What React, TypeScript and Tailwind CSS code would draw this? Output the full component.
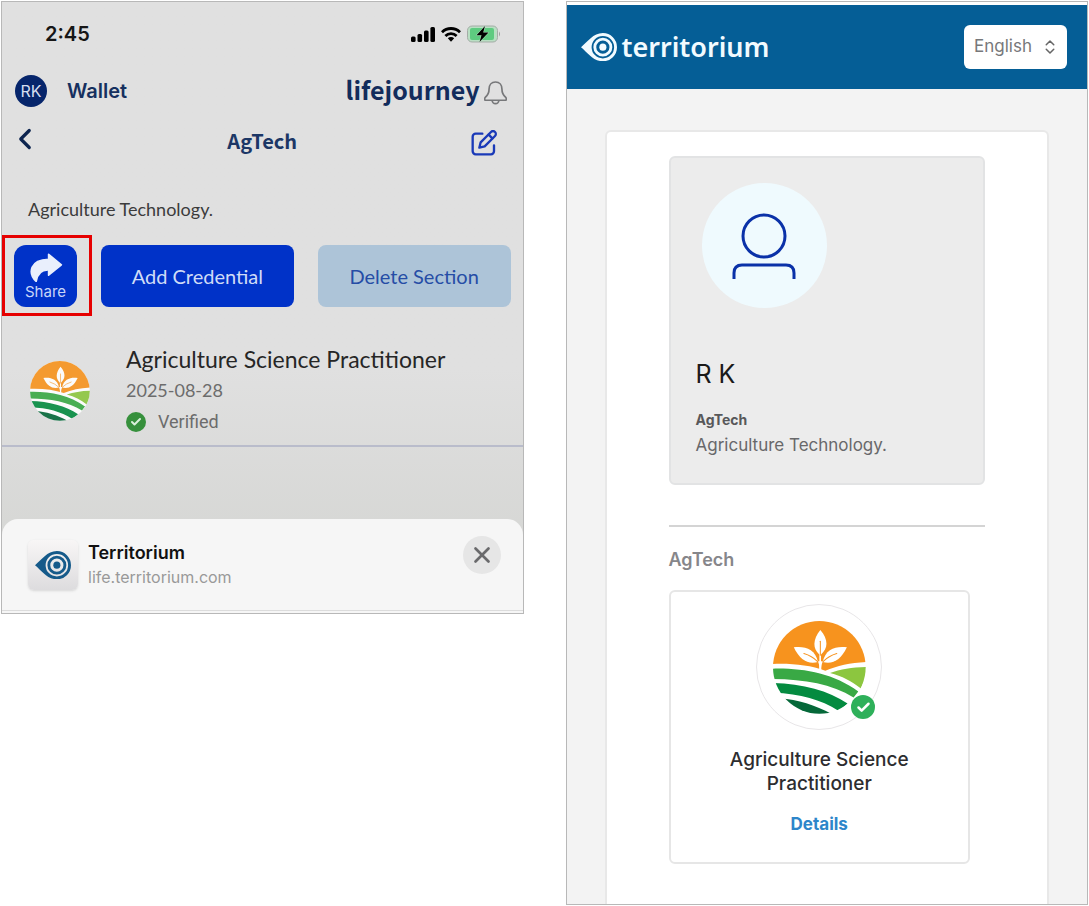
import React from 'react';
import clsx from 'clsx';
import { Check, ChevronLeft, ChevronsUpDown, X } from 'lucide-react';

const INTER = "font-['Inter',sans-serif]";
const LATO = "font-['Lato',sans-serif]";
const BRAND = "font-['Noto_Sans_CJK_JP',sans-serif]";

interface IconProps {
    className?: string;
}

const FieldLogo: React.FC<IconProps & { id: string }> = ({ className, id }) => (
    <svg viewBox="0 0 277 277" className={className} aria-hidden="true">
        <clipPath id={id}>
            <circle cx="138" cy="138" r="138" />
        </clipPath>
        <g clipPath={`url(#${id})`}>
            <rect width="277" height="277" fill="#fff" />
            {/* Sky */}
            <path d="M0 0H277V122C230 124 190 134 156 148C110 132 60 126 0 128Z" fill="#f7931e" />
            {/* Hills */}
            <path d="M170 155C200 144 235 138 277 137V165L262 201C235 180 205 164 170 155Z" fill="#8cc63f" />
            <path d="M0 142C90 140 180 156 254 210L240 228C175 188 95 174 0 173Z" fill="#39a945" />
            <path d="M0 185C90 187 165 208 222 246L196 268C140 234 85 217 0 214Z" fill="#048b40" />
            <path d="M20 230C75 234 125 250 175 277H20Z" fill="#056839" />
        </g>
        {/* Seedling */}
        <g fill="#fff">
            <path d="M141 27C166 56 164 82 143 100V150H138V100C118 82 118 56 141 27Z" />
            <path d="M62 78C94 74 126 82 134 122C104 130 80 116 62 78Z" />
            <path d="M220 78C188 74 156 82 148 122C178 130 202 116 220 78Z" />
            <path d="M134 120Q139 130 139 148H144Q143 130 149 120Z" />
        </g>
        <g fill="none" stroke="#f7931e" strokeWidth="3" strokeLinecap="round">
            <path d="M141 60V102" />
            <path d="M92 97Q116 104 133 121" />
            <path d="M190 97Q166 104 149 121" />
        </g>
    </svg>
);

const EyeLogo: React.FC<IconProps> = ({ className }) => (
    <svg viewBox="0 0 112 88" className={className} fill="none" stroke="currentColor" aria-hidden="true">
        <path
            d="M0 44C20 28 38 0 68 0a44 44 0 0 1 0 88C38 88 20 60 0 44ZM68 9a35 35 0 1 0 0 70a35 35 0 1 0 0-70Z"
            fill="currentColor"
            fillRule="evenodd"
            stroke="none"
        />
        <circle cx="68" cy="44" r="25" strokeWidth="9" />
        <circle cx="68" cy="44" r="11" fill="currentColor" stroke="none" />
    </svg>
);

const SignalIcon = () => (
    <svg viewBox="0 0 24 15" className="w-6" aria-hidden="true">
        <rect x="0" y="9.5" width="4.6" height="5.5" rx="1.5" />
        <rect x="6.5" y="7" width="4.6" height="8" rx="1.5" />
        <rect x="13" y="3.5" width="4.6" height="11.5" rx="1.5" />
        <rect x="19.4" y="0" width="4.6" height="15" rx="1.5" />
    </svg>
);

const WifiIcon = () => (
    <svg viewBox="0 0 20 15" className="w-5" aria-hidden="true">
        <g fill="none" stroke="#000" strokeWidth="2.8">
            <path d="M1 5.2A12.8 12.8 0 0 1 19 5.2" />
            <path d="M4.4 9A8 8 0 0 1 15.6 9" />
        </g>
        <path d="M6.8 11.2a4.6 4.6 0 0 1 6.4 0L10 14.8Z" />
    </svg>
);

const BatteryIcon = () => (
    <svg viewBox="0 0 34 18" className="w-[34px]" aria-hidden="true">
        <rect x="0.5" y="1" width="30" height="16" rx="4.5" fill="#b9dfc3" stroke="#a5aca7" />
        <path d="M5 3H25Q27 3 27 5V13Q27 15 25 15H5Q3 15 3 13V5Q3 3 5 3Z" fill="#5ecb80" />
        <path d="M32 6.5Q34 9 32 11.5Z" fill="#9a9f9b" />
        <path d="M18 1L9.5 10.2H14.5L12.5 17L21.5 7.6H16.2Z" stroke="#b9dfc3" strokeWidth="1" paintOrder="stroke" />
    </svg>
);

const BellIcon = () => (
    <svg
        viewBox="0 0 68 70"
        className="w-[23px]"
        fill="none"
        stroke="#77787a"
        strokeWidth="5"
        strokeLinejoin="round"
        aria-hidden="true"
    >
        <path d="M34 3C22 3 15 12 15 24C15 36 12 42 4 48Q2 50 2 54Q2 57 6 57H62Q66 57 66 54Q66 50 64 48C56 42 53 36 53 24C53 12 46 3 34 3Z" />
        <path d="M24 57a10 10 0 0 0 20 0" />
    </svg>
);

const EditIcon = () => (
    <svg
        viewBox="0 0 78 78"
        className="w-[26px]"
        fill="none"
        stroke="#1a3ab8"
        strokeWidth="7"
        strokeLinecap="round"
        strokeLinejoin="round"
        aria-hidden="true"
    >
        <path d="M34 11H14a9 9 0 0 0-9 9V64a9 9 0 0 0 9 9H60a9 9 0 0 0 9-9V46" />
        <path d="M25 53L29 37L60 6a8 8 0 0 1 12 12L41 49Z" />
        <path d="M53 14L64 25" />
    </svg>
);

const ShareIcon = () => (
    <svg
        viewBox="0 0 104 90"
        className="w-[34px]"
        fill="#e9effc"
        stroke="#e9effc"
        strokeWidth="5"
        strokeLinejoin="round"
        aria-hidden="true"
    >
        <path d="M60 4L99 36L60 68V52C40 51 26 62 22 87C-4 62 2 20 60 19Z" />
    </svg>
);

const PersonIcon = () => (
    <svg viewBox="0 0 64 66" className="w-16" fill="none" stroke="#0a31a8" strokeWidth="3" aria-hidden="true">
        <circle cx="32" cy="23" r="21" />
        <path d="M2 66V60Q2 52 10 52H54Q62 52 62 60V66" />
    </svg>
);

const WalletPanel = () => (
    <section
        className={clsx(
            "min-w-0 flex-1 border border-[#b8b8b8] bg-linear-to-b from-[#e0e0e0] from-60% to-[#d2d3d0]",
            INTER
        )}
    >
        {/* Status bar */}
        <div className="flex h-16 items-center justify-between pr-[22px] pl-[43px]">
            <span className="text-xl font-semibold text-[#161616]">2:45</span>
            <div className="flex items-center gap-[6px]">
                <SignalIcon />
                <WifiIcon />
                <BatteryIcon />
            </div>
        </div>

        <header className="flex h-[50px] items-center justify-between pr-4 pl-[13px] text-[#16305f]">
            <div className="flex items-center gap-5">
                <span className="flex size-8 items-center justify-center rounded-full bg-[#06256b] text-base text-[#d5def0]">
                    RK
                </span>
                <h1 className="text-xl font-semibold">Wallet</h1>
            </div>
            <div className="flex items-center gap-1">
                <span className={clsx("pb-1 text-[25px] leading-8 font-bold text-[#122c5c]", BRAND)}>lifejourney</span>
                <button type="button" aria-label="Notifications" className="pt-1">
                    <BellIcon />
                </button>
            </div>
        </header>

        <div className="grid h-[54px] grid-cols-[1fr_auto_1fr] items-center px-[6px]">
            <button type="button" aria-label="Back" className="justify-self-start pb-2 text-[#0d2550]">
                <ChevronLeft size={34} strokeWidth={2.25} />
            </button>
            <h2 className={clsx("pb-1 text-xl leading-8 font-bold text-[#1c3766]", BRAND)}>AgTech</h2>
            <button type="button" aria-label="Edit section" className="mr-5 justify-self-end">
                <EditIcon />
            </button>
        </div>

        <p className={clsx("mt-[27px] px-[26px] text-lg leading-6 text-[#3b3b3b]", LATO)}>Agriculture Technology.</p>

        <div className={clsx("mt-6 flex h-[62px] gap-6 px-3 text-xl", LATO)}>
            <div className="relative flex">
                <button
                    type="button"
                    className={clsx(
                        "flex w-[63px] flex-col items-center justify-end rounded-xl bg-[#0032c8] pb-[5px] text-[15px] leading-5 text-[#c9d6f8]",
                        INTER
                    )}
                >
                    <ShareIcon />
                    Share
                </button>
                {/* Highlight frame */}
                <span className="pointer-events-none absolute -top-[10px] -right-[15px] -bottom-[9px] -left-3 border-3 border-[#e60000]" />
            </div>
            <button type="button" className="flex-1 rounded-lg bg-[#0032c8] text-[#cfdcf7]">
                Add Credential
            </button>
            <button type="button" className="flex-1 rounded-lg bg-[#adc4d8] text-[#264da6]">
                Delete Section
            </button>
        </div>

        <article className="mt-[37px] flex items-center gap-9 border-b-2 border-[#b9bccb] pb-2 pl-7">
            <FieldLogo id="field-small" className="size-[60px] shrink-0 opacity-90" />
            <div className={clsx("text-[#6c6c6c]", LATO)}>
                <h3 className="text-[23px] leading-[31px] text-[#262626]">Agriculture Science Practitioner</h3>
                <p className="text-lg leading-[31px]">2025-08-28</p>
                <p className="flex items-center gap-3 font-['Roboto',sans-serif] text-lg leading-[31px]">
                    <span className="flex size-5 items-center justify-center rounded-full bg-[#36903c]">
                        <Check size={12} strokeWidth={4} className="text-[#d9f0da]" />
                    </span>
                    Verified
                </p>
            </div>
        </article>

        {/* Share sheet */}
        <div className="mt-[72px] rounded-t-2xl bg-[#f6f6f6]">
            <div className="flex items-start justify-between border-b border-[#dcdcdc] pt-[17px] pr-[22px] pb-5 pl-[26px]">
                <div className="flex items-center gap-[10px] pt-1">
                    <span className="flex size-[50px] items-center justify-center rounded-md bg-linear-to-b from-[#f8f6f6] to-[#dddcde] shadow-sm">
                        <EyeLogo className="w-9 text-[#155a8a]" />
                    </span>
                    <div>
                        <h3 className="text-lg leading-6 font-semibold text-[#111111]">Territorium</h3>
                        <p className="text-base leading-6 text-[#999999]">life.territorium.com</p>
                    </div>
                </div>
                <button
                    type="button"
                    aria-label="Close"
                    className="flex size-[38px] items-center justify-center rounded-full bg-[#e6e6e6] text-[#6a6a6c]"
                >
                    <X size={26} strokeWidth={2.5} />
                </button>
            </div>
            <div className="h-0.5" />
        </div>
    </section>
);

const ProfilePanel = () => (
    <section
        className={clsx(
            "flex min-w-0 flex-1 flex-col self-stretch border border-[#b8b8b8] bg-[#f3f3f3]",
            INTER
        )}
    >
        <header className="flex h-[87px] items-center justify-between border-t-3 border-white bg-[#055e96] pr-5 pl-[14px]">
            <a href="#home" className="flex items-center gap-[5px] text-[#f2fbff]">
                <EyeLogo className="w-9" />
                <span className="font-['Noto_Sans',sans-serif] text-[27px] leading-8 font-semibold">territorium</span>
            </a>
            <div className="relative">
                <select
                    aria-label="Language"
                    defaultValue="en"
                    className="h-11 w-[103px] appearance-none rounded-md bg-white px-[10px] text-[17px] text-[#77787a]"
                >
                    <option value="en">English</option>
                </select>
                <ChevronsUpDown
                    size={18}
                    className="pointer-events-none absolute top-[13px] right-2 text-[#666666]"
                />
            </div>
        </header>

        <main className="mx-[38px] mt-[41px] flex-1 rounded-t-md border-2 border-b-0 border-[#e8e8e8] bg-white px-[62px] pt-6">
            <section className="rounded-md border-2 border-[#e2e3e4] bg-[#ececec] p-[25px]">
                <div className="ml-[6px] flex size-[125px] items-center justify-center rounded-full bg-[#effafe]">
                    <PersonIcon />
                </div>
                <h1 className="mt-[50px] text-[25px] leading-8 text-[#1a1a1a]">R K</h1>
                <h2 className="mt-[18px] text-sm leading-6 font-bold text-[#58585a]">AgTech</h2>
                <p className="text-[17px] leading-[26px] text-[#68686a]">Agriculture Technology.</p>
            </section>

            <hr className="mt-10 border-t-2 border-[#d4d4d4]" />

            <h2 className="mt-[19px] text-lg leading-7 font-semibold text-[#86868a]">AgTech</h2>

            <article className="mt-4 mr-[15px] flex flex-col items-center rounded-md border-2 border-[#e6e6e6] px-10 pt-3 pb-[26px] text-center">
                <div className="relative flex size-[126px] items-center justify-center rounded-full border border-[#e8e6e8]">
                    <FieldLogo id="field-large" className="size-[93px]" />
                    <span className="absolute right-[6px] bottom-[10px] flex size-6 items-center justify-center rounded-full bg-[#2eb05a] text-white">
                        <Check size={15} strokeWidth={4} />
                    </span>
                </div>
                <h3 className="mt-[18px] px-3 text-[19px] leading-6 font-medium text-[#2d2d2f]">
                    Agriculture Science Practitioner
                </h3>
                <a href="#details" className="mt-4 text-[17px] leading-6 font-bold text-[#2d86ca]">
                    Details
                </a>
            </article>
        </main>
    </section>
);

export default function App() {
    return (
        <div className="flex min-h-screen items-start gap-[42px] bg-white p-px">
            <WalletPanel />
            <ProfilePanel />
        </div>
    );
}
